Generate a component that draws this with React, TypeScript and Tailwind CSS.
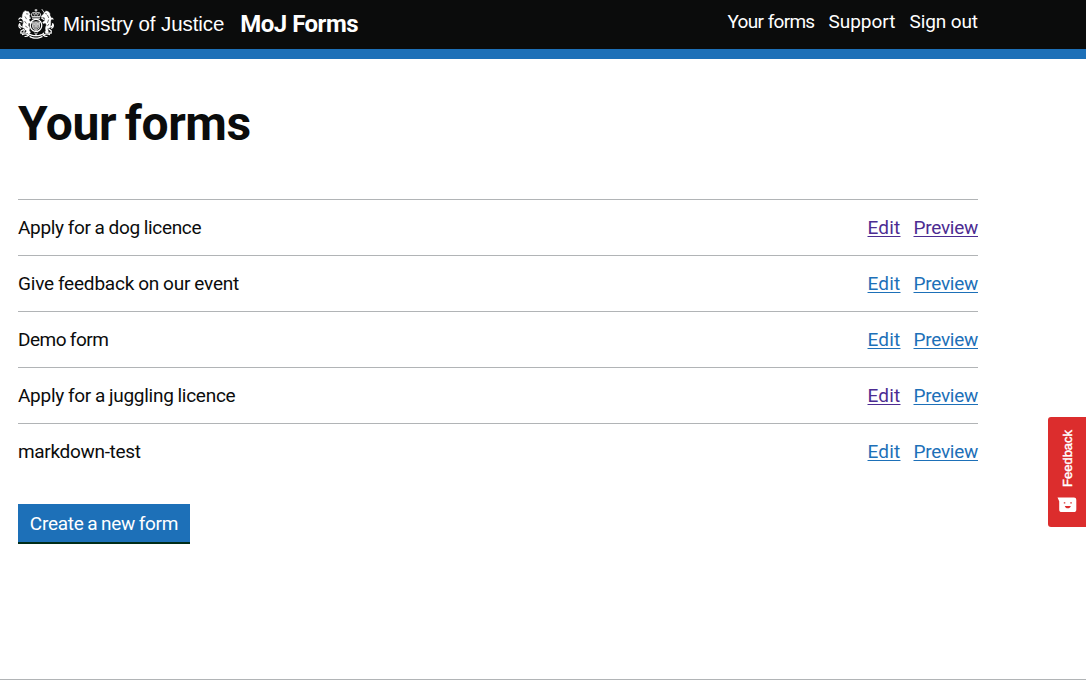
type Form = { name: string; nameClass: string; editClass: string; previewClass: string };

const link = "text-[#1d70b8]";
const visited = "text-[#4c2c92]";

const forms: Form[] = [
  { name: "Apply for a dog licence", nameClass: "tracking-[-0.31px]", editClass: visited, previewClass: visited },
  { name: "Give feedback on our event", nameClass: "tracking-[-0.2px]", editClass: link, previewClass: link },
  { name: "Demo form", nameClass: "tracking-[-0.48px]", editClass: link, previewClass: link },
  { name: "Apply for a juggling licence", nameClass: "tracking-[-0.27px]", editClass: visited, previewClass: link },
  { name: "markdown-test", nameClass: "tracking-[-0.32px]", editClass: link, previewClass: link },
];

function Crest() {
  return (
    <svg viewBox="0 0 36 30" className="h-[30px] w-9 shrink-0" fill="none" stroke="#fff" strokeLinecap="round" strokeLinejoin="round" aria-hidden="true">
      {/* crown */}
      <path d="M18 .2v2.2M17 1.2h2" strokeWidth=".9" />
      <path d="M13.8 6.8c-1.5-3.4 2.2-4 4.2-2.6 2-1.4 5.7-.8 4.2 2.6M18 4v2M15.8 4.6l.5 1.6M20.2 4.6l-.5 1.6" strokeWidth=".9" />
      <path d="M14 7.7h8M14.4 9.2h7.2" strokeWidth="1" />
      {/* garter and shield */}
      <ellipse cx="18" cy="16.4" rx="5.7" ry="6.1" strokeWidth="1.3" strokeDasharray="1.5 .5" />
      <path d="M14.5 13h7v4.5c0 2-1.5 3-3.5 4-2-1-3.5-2-3.5-4z" fill="#fff" fillOpacity=".35" strokeWidth=".7" />
      <path d="M18 13v8M14.5 17h7M15.5 14.3h1.6M15.5 15.6h1.6M19.3 14.4h1.2v1.3h-1.2zM16 18.2v1.2M19.4 18.2l1 1" strokeWidth=".7" />
      {/* lion */}
      <path d="M7.4 1.8L9 2.4l1.5.2.9 1.5.8 1.2-.8 1.3.4 2-1 1.9 1 1.8 1.9 1-.5 1.2-2.5-.4-.5 2.2 1.6 2.4-.6 2.9 1.3 1.6-.5 1H7.8l-.2-1.2 1-.8-1-2-2.3-1.2-.7-2.8 1-3.2-1.6-3.4.4-3.6 1-2.8z" fill="#fff" strokeWidth=".4" />
      <path d="M4.8 10L2.2 8.8M2.2 8.8L.9 10.2M4 13L1.7 12.3M5.4 18c-2 .2-3.8-1-3.7-3.4-1.3 1.4-1.1 3.7.8 4.7M5.5 20.5L3 22l-.3 2.2H5M10.3 10.6l2-1.5M8.4 19.7L6 21.6v2" strokeWidth="1.2" />
      <path d="M8.5 4.8l1.4.2M7.2 7.8l1.2 2M6.8 12.4l1.3 1.8M7.6 17.3l1.6 1" stroke="#0b0c0c" strokeWidth=".6" />
      {/* unicorn */}
      <path d="M27 4.8L24 .4" strokeWidth=".8" />
      <path d="M28 2l2.2.6 1.6 1.7.2 2.3 1.1 2-.4 3.3-.1 4-.9 2.7-2 1-.5 2.2 1 .9-.4 1.4h-2.4l-.2-1.6 1-1.7-.7-2.5 1-2.2-1-2.1-2.4.4-.5-1.1 2.1-1.5.4-1.7-1.1-1.9-2.3.3-.5-1.2 2.3-2.2z" fill="#fff" strokeWidth=".4" />
      <path d="M32 11l2-1.8 1 1M31.4 18c2 .2 3.5-1 3.3-3.4 1.2 1.4.8 3.6-1 4.7M30.8 20l2.4 1.8v2.4H31M26 10.6l-2.2-1.4M27.8 20l2 1.7v2" strokeWidth="1.2" />
      <path d="M27.6 4.6l1.1.4M29.6 6.4l1 2.2M30.5 11l-.9 2.5M30.8 15.2l-1.2 1.6" stroke="#0b0c0c" strokeWidth=".6" />
      {/* compartment and motto */}
      <path d="M4.5 25.6c2.4-1.4 4.6-.5 6.2.7M31.5 25.6c-2.4-1.4-4.6-.5-6.2.7M7 27.5c2 .2 3-.6 4-1.5M29 27.5c-2 .2-3-.6-4-1.5" strokeWidth="1.2" />
      <path d="M10.5 24.3c2.3 3.2 12.7 3.2 15 0M12 27.6c3.4 2.1 8.6 2.1 12 0" strokeWidth="1.3" strokeDasharray="1.8 .6" />
      <path d="M16.5 24l1.5 1.2 1.5-1.2M18 25.3v1.5" strokeWidth=".8" />
    </svg>
  );
}

export default function App() {
  return (
    <div className="relative flex h-[680px] w-full flex-col overflow-hidden border-b border-[#b1b4b6] bg-white font-['Roboto',sans-serif] text-[19px] leading-[25px] text-[#0b0c0c]">
      <header className="h-[59px] shrink-0 border-b-10 border-[#1d70b8] bg-[#0b0c0c] text-white">
        <div className="ml-[18px] flex w-[960px] items-start justify-between">
          <div className="flex pt-[9px]">
            <Crest />
            <span className="ml-[9px] mt-[3px] whitespace-nowrap font-['Liberation_Sans',sans-serif] text-[20.5px] leading-6 tracking-[-0.09px]">Ministry of Justice</span>
            <span className="ml-[16px] mt-[3px] whitespace-nowrap text-[24px] font-bold leading-6 tracking-[-0.5px]">MoJ Forms</span>
          </div>
          <nav className="flex gap-[14px] whitespace-nowrap pt-[9px]">
            <a href="#" className="tracking-[-0.72px] [word-spacing:0.5px]">Your forms</a>
            <a href="#">Support</a>
            <a href="#" className="tracking-[-0.1px]">Sign out</a>
          </nav>
        </div>
      </header>
      <main className="ml-[18px] w-[960px]">
        <h1 className="mt-[40px] text-[48px] font-bold leading-[50px] tracking-[-0.4px] [word-spacing:-3px]">Your forms</h1>
        <ul className="mt-[50px]">
          {forms.map((f) => (
            <li key={f.name} className="flex h-14 items-center justify-between border-t border-[#b1b4b6]">
              <span className={`[word-spacing:-0.5px] ${f.nameClass}`}>{f.name}</span>
              <span className="flex gap-[13px]">
                <a href="#" className={`underline decoration-1 underline-offset-2 tracking-[0.2px] ${f.editClass}`}>Edit</a>
                <a href="#" className={`underline decoration-1 underline-offset-2 tracking-[-0.27px] ${f.previewClass}`}>Preview</a>
              </span>
            </li>
          ))}
        </ul>
        <button className="mt-[25px] h-10 w-[172px] whitespace-nowrap border-b-2 border-[#002d18] bg-[#1d70b8] pt-px text-[19px] leading-[38px] tracking-[-0.26px] text-white [word-spacing:-0.8px]">
          Create a new form
        </button>
      </main>
      <button className="absolute right-0 top-[417px] flex h-[110px] w-[38px] flex-col items-center rounded-l-[3px] bg-[#dc2d2d] pt-[12px] text-white">
        <span className="ml-px h-[58px] rotate-180 whitespace-nowrap font-['Liberation_Sans',sans-serif] text-[13px] leading-[16px] [-webkit-text-stroke:0.4px_white] [writing-mode:vertical-rl]">Feedback</span>
        <svg viewBox="0 0 20 16" className="mt-[10px] h-4 w-5" aria-hidden="true">
          <path d="M.5.5H17a2.3 2.3 0 0 1 2.3 2.3v9.7a2.6 2.6 0 0 1-2.6 2.6H4.8a2.6 2.6 0 0 1-2.6-2.6V4.2z" fill="#fff" />
          <path d="M6.8 5.2h1.5v1.4H6.8zM13.3 5.2h1.5v1.4h-1.5z" fill="#dc2d2d" />
          <path d="M7.8 9h6c-.4 1.5-1.5 2.3-3 2.3S8.2 10.5 7.8 9z" fill="#dc2d2d" />
        </svg>
      </button>
    </div>
  );
}
